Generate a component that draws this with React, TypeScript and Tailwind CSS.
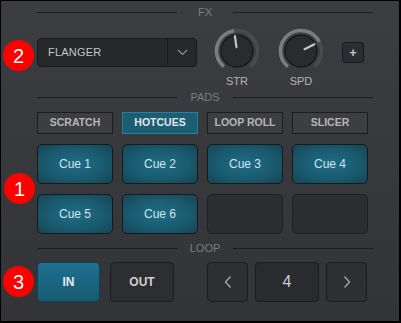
import React from "react";

const FONT = { fontFamily: '"Liberation Sans", Arial, sans-serif' };

function polar(cx: number, cy: number, r: number, deg: number) {
  const a = (deg * Math.PI) / 180;
  return [cx + r * Math.sin(a), cy - r * Math.cos(a)];
}

function arc(cx: number, cy: number, r: number, a0: number, a1: number) {
  const [x0, y0] = polar(cx, cy, r, a0);
  const [x1, y1] = polar(cx, cy, r, a1);
  const large = a1 - a0 > 180 ? 1 : 0;
  return `M ${x0} ${y0} A ${r} ${r} 0 ${large} 1 ${x1} ${y1}`;
}

function Knob({ value, label }: { value: number; label: string }) {
  const c = 23;
  const [lx0, ly0] = polar(c, c, 4, value);
  const [lx1, ly1] = polar(c, c, 15, value);
  return (
    <div className="flex flex-col items-center w-[46px]">
      <svg width="46" height="46" viewBox="0 0 46 46">
        <path d={arc(c, c, 20.5, -140, 140)} stroke="#4a4b4e" strokeWidth="3.5" fill="none" />
        <path d={arc(c, c, 20.5, -140, value)} stroke="#7b7c7f" strokeWidth="3.5" fill="none" />
        <circle cx={c} cy={c} r="16.5" fill="#0f0f10" />
        <circle cx={c} cy={c} r="15.5" fill="#2a2b2e" />
        <line x1={lx0} y1={ly0} x2={lx1} y2={ly1} stroke="#c4c4c4" strokeWidth="2.2" strokeLinecap="round" />
      </svg>
      <div className="h-[12px] leading-[12px] text-[11px] text-[#b4b5b8] mt-px" style={FONT}>
        {label}
      </div>
    </div>
  );
}

function Header({ label }: { label: string }) {
  return (
    <div className="flex items-center h-[12px] w-[336px]">
      <div className="flex-1 h-px bg-[#1b1c1e]" />
      <div className="w-[56px] text-center text-[11px] leading-[12px] text-[#7c7d80]" style={FONT}>
        {label}
      </div>
      <div className="flex-1 h-px bg-[#1b1c1e]" />
    </div>
  );
}

function Badge({ n, className }: { n: string; className: string }) {
  return (
    <div
      className={`absolute w-[31px] h-[31px] rounded-full bg-[#ff0000] flex items-center justify-center text-white text-[20px] leading-none ${className}`}
      style={FONT}
    >
      {n}
    </div>
  );
}

function Tab({ label, active }: { label: string; active?: boolean }) {
  return (
    <div
      className={`h-[22px] flex items-center justify-center text-[10.5px] font-bold border ${
        active
          ? "bg-[#1b5e74] border-[#2a7f99] text-[#e2e8ea]"
          : "bg-[#3d3e41] border-[#1d1d1f] text-[#b5b6b8]"
      }`}
      style={FONT}
    >
      {label}
    </div>
  );
}

function Cue({ label }: { label?: string }) {
  if (!label) {
    return <div className="h-[40px] rounded-[5px] bg-[#2c2d30] border border-[#1f2022]" />;
  }
  return (
    <div
      className="h-[40px] rounded-[5px] border border-[#18191a] flex items-center justify-center text-[12px] text-[#d5e3e8]"
      style={{ ...FONT, background: "radial-gradient(ellipse at center, #1e6d87 0%, #1a5b70 55%, #154555 100%)" }}
    >
      {label}
    </div>
  );
}

function Chevron({ dir }: { dir: "left" | "right" }) {
  return (
    <svg width="8" height="14" viewBox="0 0 8 14">
      <path
        d={dir === "left" ? "M6.5 1.5 L1.5 7 L6.5 12.5" : "M1.5 1.5 L6.5 7 L1.5 12.5"}
        stroke="#a8a9ac"
        strokeWidth="1.3"
        fill="none"
      />
    </svg>
  );
}

export default function App() {
  return (
    <div
      className="relative w-[401px] h-[323px] box-border border-t border-l border-r-2 border-b-2 border-black bg-gradient-to-b from-[#3c3d40] to-[#333437] overflow-hidden"
      style={FONT}
    >
      <div className="flex flex-col pl-[36px]">
        <div className="mt-[5px]">
          <Header label="FX" />
        </div>

        <div className="flex items-start mt-[10px] h-[58px]">
          <div className="mt-[10px] w-[160px] h-[29px] rounded-[4px] bg-[#27282a] border border-[#19191a] flex">
            <div className="flex-1 flex items-center pl-[10px] text-[11px] text-[#c3c4c7] tracking-[0.2px]">FLANGER</div>
            <div className="w-[29px] border-l border-[#19191a] flex items-center justify-center">
              <svg width="11" height="7" viewBox="0 0 11 7">
                <path d="M1 1 L5.5 5.5 L10 1" stroke="#8e8f92" strokeWidth="1.2" fill="none" />
              </svg>
            </div>
          </div>
          <div className="ml-[17px]">
            <Knob value={-8} label="STR" />
          </div>
          <div className="ml-[18px]">
            <Knob value={63} label="SPD" />
          </div>
          <div className="ml-[18px] mt-[14px] w-[22px] h-[21px] rounded-[3px] bg-[#2c2d30] border border-[#18191a] flex items-center justify-center text-[13px] font-bold text-[#c2c3c6] leading-none">
            +
          </div>
        </div>

        <div className="mt-[5px]">
          <Header label="PADS" />
        </div>

        <div className="mt-[9px] grid grid-cols-[76px_76px_76px_76px] gap-x-[9px]">
          <Tab label="SCRATCH" />
          <Tab label="HOTCUES" active />
          <Tab label="LOOP ROLL" />
          <Tab label="SLICER" />
        </div>

        <div className="mt-[10px] grid grid-cols-[76px_76px_76px_76px] gap-x-[9px] gap-y-[10px]">
          <Cue label="Cue 1" />
          <Cue label="Cue 2" />
          <Cue label="Cue 3" />
          <Cue label="Cue 4" />
          <Cue label="Cue 5" />
          <Cue label="Cue 6" />
          <Cue />
          <Cue />
        </div>

        <div className="mt-[8px]">
          <Header label="LOOP" />
        </div>

        <div className="mt-[8px] flex h-[40px]">
          <div
            className="w-[63px] rounded-[4px] border border-[#123f4f] flex items-center justify-center text-[12px] font-bold text-[#e6eaec]"
            style={{ background: "linear-gradient(to bottom, #1e7090, #175a72)" }}
          >
            IN
          </div>
          <div className="ml-[10px] w-[64px] rounded-[4px] bg-[#2d2e31] border border-[#1b1c1e] flex items-center justify-center text-[12px] font-bold text-[#cfd0d2]">
            OUT
          </div>
          <div className="ml-[33px] w-[41px] rounded-[4px] bg-[#2e2f32] border border-[#1b1c1e] flex items-center justify-center">
            <Chevron dir="left" />
          </div>
          <div className="ml-[7px] w-[64px] rounded-[4px] bg-[#2a2b2e] border border-[#1b1c1e] flex items-center justify-center text-[16px] text-[#cacbce]">
            4
          </div>
          <div className="ml-[7px] w-[41px] rounded-[4px] bg-[#2e2f32] border border-[#1b1c1e] flex items-center justify-center">
            <Chevron dir="right" />
          </div>
        </div>
      </div>

      <Badge n="2" className="left-[2px] top-[39px]" />
      <Badge n="1" className="left-[3px] top-[172px]" />
      <Badge n="3" className="left-[2px] top-[265px]" />
    </div>
  );
}
